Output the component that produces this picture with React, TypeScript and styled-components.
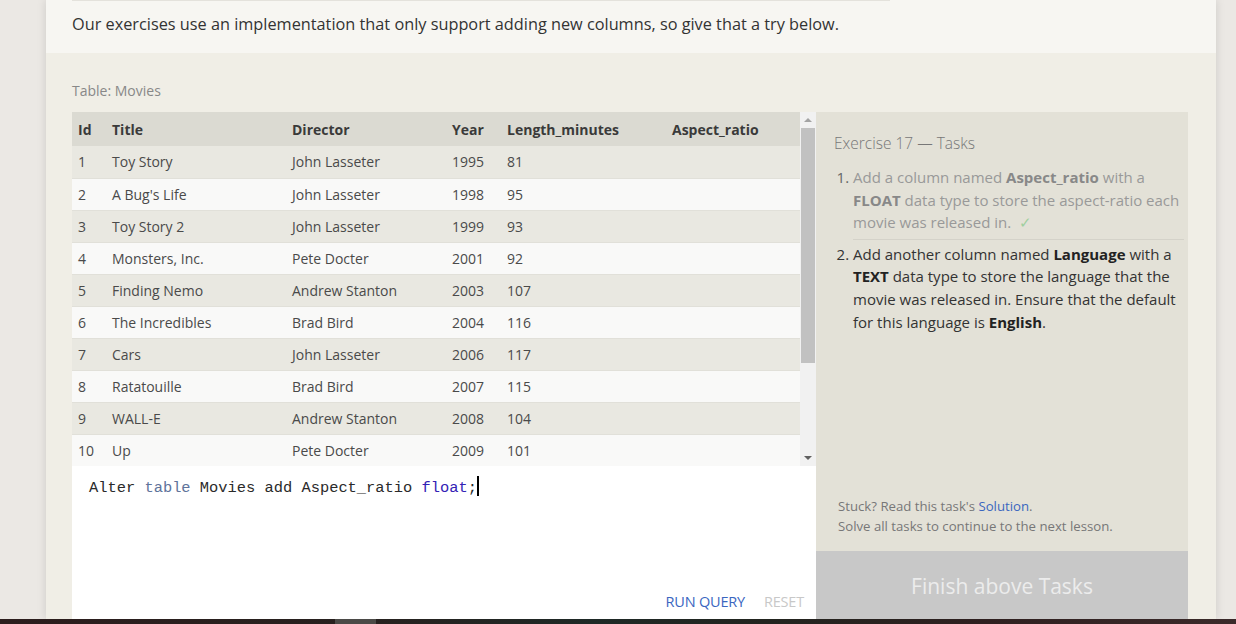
import React from "react";
import styled, { createGlobalStyle } from "styled-components";

const GlobalStyle = createGlobalStyle`
  html, body {
    margin: 0;
    padding: 0;
    background: #ebe8e4;
    overflow: hidden;
  }
  * {
    box-sizing: border-box;
  }
`;

const Screen = styled.div`
  height: 624px;
  display: flex;
  flex-direction: column;
  overflow: hidden;
  font-family: "Open Sans", "Noto Sans", sans-serif;
  color: #333;
`;

const Viewport = styled.div`
  flex: 1;
  overflow: hidden;
  padding: 0 20px 0 46px;
`;

const Card = styled.div`
  width: 1170px;
  box-shadow: 0 0 9px rgba(0, 0, 0, 0.13);
  background: #f0eee6;
`;

const Intro = styled.div`
  background: #f7f6f2;
  padding: 0 26px 18px;
`;

const Rule = styled.div`
  width: 818px;
  height: 1px;
  background: #e4e2dc;
`;

const IntroText = styled.p`
  margin: 12px 0 0;
  font-size: 16.3px;
  line-height: 22px;
  color: #333;
`;

const Exercise = styled.div`
  padding: 28px 28px 0 26px;
`;

const TableLabel = styled.div`
  font-size: 14px;
  line-height: 20px;
  color: #888;
  margin-bottom: 11px;
`;

const Workspace = styled.div`
  display: grid;
  grid-template-columns: 744px 372px;
`;

const LeftColumn = styled.div`
  display: flex;
  flex-direction: column;
`;

const TableBox = styled.div`
  height: 354px;
  display: flex;
  background: #f9f9f8;
`;

const TableScroll = styled.div`
  width: 728px;
  overflow: hidden;
`;

const Table = styled.table`
  width: 728px;
  table-layout: fixed;
  border-collapse: collapse;
  font-size: 14px;
`;

const HeadCell = styled.th`
  height: 34px;
  padding: 0 6px;
  text-align: left;
  font-weight: 700;
  color: #3a3a3a;
  background: #dbdad2;
  white-space: nowrap;
`;

const Row = styled.tr<{ $odd: boolean }>`
  background: ${(p) => (p.$odd ? "#e9e8e1" : "#f9f9f8")};
  border-bottom: 1px solid #e1e0d9;
`;

const Cell = styled.td`
  height: 32px;
  padding: 0 6px;
  color: #4a4a4a;
  white-space: nowrap;
`;

const ScrollTrack = styled.div`
  width: 16px;
  background: #f1f1f1;
  display: flex;
  flex-direction: column;
  align-items: center;
`;

const ScrollArrow = styled.div<{ $down?: boolean }>`
  height: 16px;
  width: 16px;
  display: flex;
  align-items: center;
  justify-content: center;
  &::after {
    content: "";
    border-left: 4px solid transparent;
    border-right: 4px solid transparent;
    ${(p) =>
      p.$down ? "border-top: 4px solid #606060;" : "border-bottom: 4px solid #a3a3a3;"}
  }
`;

const ScrollThumb = styled.div`
  width: 14px;
  height: 235px;
  background: #c1c1c1;
`;

const ScrollSpace = styled.div`
  flex: 1;
`;

const Editor = styled.div`
  height: 153px;
  background: #fff;
  display: flex;
  flex-direction: column;
  padding: 10px 12px 0 17px;
`;

const Code = styled.div`
  font-family: "Liberation Mono", "DejaVu Sans Mono", monospace;
  font-size: 15.4px;
  line-height: 22px;
  color: #2a2a2a;
  white-space: pre;
`;

const Keyword = styled.span<{ $tone: "table" | "type" }>`
  color: ${(p) => (p.$tone === "table" ? "#60739b" : "#3322b5")};
`;

const Caret = styled.span`
  display: inline-block;
  width: 2px;
  height: 20px;
  background: #000;
  vertical-align: -4px;
`;

const EditorActions = styled.div`
  margin-top: auto;
  display: flex;
  justify-content: flex-end;
  gap: 19px;
  height: 32px;
  align-items: center;
  padding-bottom: 4px;
`;

const ActionButton = styled.span<{ $disabled?: boolean }>`
  font-size: 14.5px;
  color: ${(p) => (p.$disabled ? "#c8c8c8" : "#3a66bf")};
  letter-spacing: -0.2px;
`;

const RightColumn = styled.div`
  display: flex;
  flex-direction: column;
`;

const TasksPanel = styled.div`
  height: 439px;
  background: #e3e1d7;
  padding: 20px 4px 15px 18px;
  display: flex;
  flex-direction: column;
`;

const TasksTitle = styled.div`
  font-size: 15.5px;
  line-height: 22px;
  color: #777;
  font-weight: 300;
`;

const TaskList = styled.ol`
  margin: 12px 0 0;
  padding-left: 19px;
  font-size: 15px;
  line-height: 22.6px;
`;

const TaskItem = styled.li<{ $done?: boolean }>`
  color: ${(p) => (p.$done ? "#999" : "#333")};
  padding-bottom: ${(p) => (p.$done ? "5px" : "0")};
  margin-bottom: ${(p) => (p.$done ? "3px" : "0")};
  border-bottom: ${(p) => (p.$done ? "1px solid #d4d2c9" : "none")};
  &::marker {
    color: ${(p) => (p.$done ? "#666" : "#333")};
  }
  b {
    color: ${(p) => (p.$done ? "#888" : "#222")};
  }
`;

const Check = styled.span`
  color: #9fcf9f;
  margin-left: 8px;
`;

const Hints = styled.div`
  margin-top: auto;
  font-size: 13.2px;
  line-height: 20px;
  color: #777;
  padding-left: 4px;
`;

const Link = styled.span`
  color: #3a66bf;
`;

const FinishButton = styled.div`
  height: 68px;
  background: #c8c8c8;
  color: #ececec;
  font-size: 21px;
  display: flex;
  align-items: center;
  justify-content: center;
  padding-top: 1px;
`;

const Taskbar = styled.div`
  height: 5px;
  display: flex;
  background: linear-gradient(
    90deg,
    #2c1d1d 0%,
    #27211f 30%,
    #1e2926 48%,
    #22241f 62%,
    #2f2020 80%,
    #3b2a2a 100%
  );
`;

const TaskbarItem = styled.div`
  margin-left: 335px;
  width: 41px;
  background: #4b4a47;
`;

const movies = [
  [1, "Toy Story", "John Lasseter", 1995, 81],
  [2, "A Bug's Life", "John Lasseter", 1998, 95],
  [3, "Toy Story 2", "John Lasseter", 1999, 93],
  [4, "Monsters, Inc.", "Pete Docter", 2001, 92],
  [5, "Finding Nemo", "Andrew Stanton", 2003, 107],
  [6, "The Incredibles", "Brad Bird", 2004, 116],
  [7, "Cars", "John Lasseter", 2006, 117],
  [8, "Ratatouille", "Brad Bird", 2007, 115],
  [9, "WALL-E", "Andrew Stanton", 2008, 104],
  [10, "Up", "Pete Docter", 2009, 101],
];

const columns = [
  { name: "Id", width: 34 },
  { name: "Title", width: 180 },
  { name: "Director", width: 160 },
  { name: "Year", width: 55 },
  { name: "Length_minutes", width: 165 },
  { name: "Aspect_ratio", width: 134 },
];

export default function App() {
  return (
    <Screen>
      <GlobalStyle />
      <Viewport>
        <Card>
          <Intro>
            <Rule />
            <IntroText>
              Our exercises use an implementation that only support adding new
              columns, so give that a try below.
            </IntroText>
          </Intro>
          <Exercise>
            <TableLabel>Table: Movies</TableLabel>
            <Workspace>
              <LeftColumn>
                <TableBox>
                  <TableScroll>
                    <Table>
                      <colgroup>
                        {columns.map((c) => (
                          <col key={c.name} style={{ width: c.width }} />
                        ))}
                      </colgroup>
                      <thead>
                        <tr>
                          {columns.map((c) => (
                            <HeadCell key={c.name}>{c.name}</HeadCell>
                          ))}
                        </tr>
                      </thead>
                      <tbody>
                        {movies.map((m, i) => (
                          <Row key={m[0]} $odd={i % 2 === 0}>
                            {m.map((v, j) => (
                              <Cell key={j}>{v}</Cell>
                            ))}
                            <Cell />
                          </Row>
                        ))}
                      </tbody>
                    </Table>
                  </TableScroll>
                  <ScrollTrack>
                    <ScrollArrow />
                    <ScrollThumb />
                    <ScrollSpace />
                    <ScrollArrow $down />
                  </ScrollTrack>
                </TableBox>
                <Editor>
                  <Code>
                    Alter <Keyword $tone="table">table</Keyword> Movies add
                    Aspect_ratio <Keyword $tone="type">float</Keyword>;
                    <Caret />
                  </Code>
                  <EditorActions>
                    <ActionButton>RUN QUERY</ActionButton>
                    <ActionButton $disabled>RESET</ActionButton>
                  </EditorActions>
                </Editor>
              </LeftColumn>
              <RightColumn>
                <TasksPanel>
                  <TasksTitle>Exercise 17 — Tasks</TasksTitle>
                  <TaskList>
                    <TaskItem $done>
                      Add a column named <b>Aspect_ratio</b> with a{" "}
                      <b>FLOAT</b> data type to store the aspect-ratio each
                      movie was released in.
                      <Check>✓</Check>
                    </TaskItem>
                    <TaskItem>
                      Add another column named <b>Language</b> with a{" "}
                      <b>TEXT</b> data type to store the language that the
                      movie was released in. Ensure that the default for this
                      language is <b>English</b>.
                    </TaskItem>
                  </TaskList>
                  <Hints>
                    Stuck? Read this task's <Link>Solution</Link>.
                    <br />
                    Solve all tasks to continue to the next lesson.
                  </Hints>
                </TasksPanel>
                <FinishButton>Finish above Tasks</FinishButton>
              </RightColumn>
            </Workspace>
          </Exercise>
        </Card>
      </Viewport>
      <Taskbar>
        <TaskbarItem />
      </Taskbar>
    </Screen>
  );
}
